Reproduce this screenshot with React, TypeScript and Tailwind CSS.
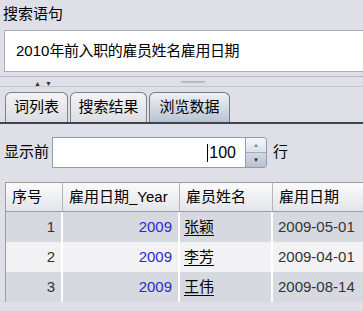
import type { FC } from "react";

const FONT = { fontFamily: '"Liberation Sans", "Noto Sans CJK SC", sans-serif' };

const rows = [
  { no: 1, year: 2009, name: "张颖", date: "2009-05-01" },
  { no: 2, year: 2009, name: "李芳", date: "2009-04-01" },
  { no: 3, year: 2009, name: "王伟", date: "2009-08-14" },
];

const Tab: FC<{ label: string; active?: boolean; w: string }> = ({ label, active, w }) => (
  <div
    className={
      "flex h-[30px] items-center justify-center rounded-t-[6px] border border-b-0 text-[15px] " +
      w +
      (active
        ? " border-[#6f7a8c] bg-gradient-to-b from-[#eef1f5] to-[#b9c4d2]"
        : " border-[#7d818a] bg-gradient-to-b from-[#f4f4f6] to-[#dcdde2]")
    }
  >
    {label}
  </div>
);

export default function App() {
  return (
    <div
      className="flex h-[311px] w-[363px] flex-col overflow-hidden bg-[#dfe0e7] text-black"
      style={FONT}
    >
      <div className="h-[30px] pl-[3px] pt-[5px] text-[15px] leading-[18px]">搜索语句</div>

      <div className="ml-[4px] flex h-[42px] items-center border border-r-0 border-[#a9adb6] bg-white pl-[11px] text-[15px]">
        <span>2010</span>
        <span className="tracking-[-0.4px]">年前入职的雇员姓名雇用日期</span>
      </div>

      {/* split pane divider */}
      <div className="relative h-[19px]">
        <div className="absolute left-0 right-0 top-[4px] h-px bg-[#b4b7bf]" />
        <div className="absolute left-0 right-0 top-[14px] h-px bg-[#c4c6cd]" />
        <div className="absolute left-[34px] top-[7px] flex gap-[4px] text-[7px] leading-[9px] text-[#333]">
          <span>▲</span>
          <span>▼</span>
        </div>
        <div className="absolute left-[181px] top-[9px] h-[2px] w-[24px] rounded bg-[#b9bbc2]" />
      </div>

      {/* tabs */}
      <div className="flex h-[31px] items-end gap-[2px] pl-[5px]">
        <Tab label="词列表" w="w-[63px]" />
        <Tab label="搜索结果" w="w-[77px]" />
        <Tab label="浏览数据" w="w-[81px]" active />
      </div>
      <div className="h-[2px] bg-[#3d4350]" />

      {/* show first N rows */}
      <div className="mt-[13px] flex h-[31px] items-center">
        <span className="w-[52px] pl-[4px] text-[15px]">显示前</span>
        <div className="flex h-[31px] w-[194px] items-center justify-end border border-[#8e9bb0] bg-white pr-[9px] text-[16px]">
          <span className="mr-[1px] h-[18px] w-px bg-black" />
          100
        </div>
        <div className="flex h-[31px] w-[21px] flex-col overflow-hidden rounded-r-[4px] border border-l-0 border-[#8e9bb0]">
          <div className="flex flex-1 items-center justify-center bg-gradient-to-b from-[#f5f6f8] to-[#dde1e8] text-[6px] text-[#888]">
            ▲
          </div>
          <div className="flex flex-1 items-center justify-center border-t border-[#a4adbb] bg-gradient-to-b from-[#d2d8e2] to-[#b9c2cf] text-[6px] text-[#222]">
            ▼
          </div>
        </div>
        <span className="ml-[6px] text-[15px]">行</span>
      </div>

      {/* table */}
      <div className="ml-[5px] mt-[14px] border-l border-t border-[#9a9ea8]">
        <div className="flex h-[29px] border-b border-[#9a9ea8] bg-gradient-to-b from-[#fbfbfc] to-[#e4e5ea] text-[15px]">
          <div className="flex w-[57px] items-center border-r border-[#b2b5bd] pl-[6px]">序号</div>
          <div className="flex w-[117px] items-center border-r border-[#b2b5bd] pl-[6px]">雇用日期_Year</div>
          <div className="flex w-[93px] items-center border-r border-[#b2b5bd] pl-[6px]">雇员姓名</div>
          <div className="flex flex-1 items-center pl-[6px]">雇用日期</div>
        </div>
        {rows.map((r, i) => (
          <div
            key={r.no}
            className={
              "flex h-[30px] text-[15px] " + (i % 2 === 1 ? "bg-[#f2f2f4]" : "bg-[#d7d9e0]")
            }
          >
            <div className="flex w-[57px] items-center justify-end border-r-2 border-white pr-[6px] text-[#333]">
              {r.no}
            </div>
            <div className="flex w-[117px] items-center justify-end border-r-2 border-white pr-[6px] text-[#2a2ad0]">
              {r.year}
            </div>
            <div className="flex w-[93px] items-center border-r-2 border-white pl-[4px]">
              <span className="underline underline-offset-[3px]">{r.name}</span>
            </div>
            <div className="flex flex-1 items-center pl-[5px] text-[#333]">{r.date}</div>
          </div>
        ))}
      </div>
    </div>
  );
}
